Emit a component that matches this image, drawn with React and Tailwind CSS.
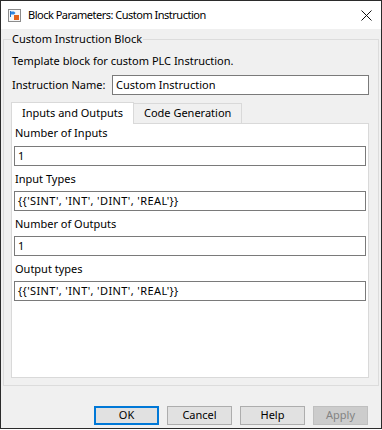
const FONT = { fontFamily: '"Noto Sans", "Open Sans", sans-serif' };

const BlockIcon = () => (
  <svg width="13" height="13" viewBox="0 0 13 13">
    <rect x="0.5" y="0.5" width="12" height="12" fill="#f7f7f7" stroke="#8c8c8c" />
    <path d="M2.5 2 V8" stroke="#1f6fc5" strokeWidth="1" />
    <path d="M3 2.5 H6 L7.5 4 L6 5.5 H3 Z" fill="#2f86df" />
    <rect x="6" y="6" width="5" height="5" fill="#e2631c" />
  </svg>
);

const CloseIcon = () => (
  <svg width="11" height="11" viewBox="0 0 11 11">
    <path d="M0.5 0.5 L10.5 10.5 M10.5 0.5 L0.5 10.5" stroke="#111" strokeWidth="1" />
  </svg>
);

const Field = ({ value, wide }) => (
  <div
    className={
      wide
        ? "h-[20px] border border-[#7a7a7a] bg-white px-[3px] flex items-center text-[11px] tracking-[0.4px] text-black whitespace-nowrap"
        : "h-[20px] border border-[#7a7a7a] bg-white px-[3px] flex items-center text-[11px] text-black whitespace-nowrap"
    }
  >
    {value}
  </div>
);

const Button = ({ children, primary, disabled }) => (
  <div
    className={
      primary
        ? "w-[65px] h-[19px] border-2 border-[#0078d7] bg-[#e1e1e1] flex items-center justify-center text-[11px] text-black"
        : disabled
        ? "w-[55px] h-[19px] border border-[#bfbfbf] bg-[#cccccc] flex items-center justify-center text-[11px] text-[#838383]"
        : "w-[65px] h-[19px] border border-[#adadad] bg-[#e1e1e1] flex items-center justify-center text-[11px] text-black"
    }
  >
    {children}
  </div>
);

export default function App() {
  const params = [
    { label: "Number of Inputs", value: "1" },
    { label: "Input Types", value: "{{'SINT', 'INT', 'DINT', 'REAL'}}", wide: true },
    { label: "Number of Outputs", value: "1" },
    { label: "Output types", value: "{{'SINT', 'INT', 'DINT', 'REAL'}}", wide: true },
  ];

  return (
    <div className="w-[382px] h-[430px] bg-white" style={FONT}>
      <div className="h-[429px] border border-[#2b2b2b] flex flex-col">
        {/* Title bar */}
        <div className="h-[28px] bg-white flex items-center pl-[7px] pr-[9px]">
          <BlockIcon />
          <span className="ml-[7px] text-[11px] leading-[16px] tracking-[-0.5px] text-black">
            Block Parameters: Custom Instruction
          </span>
          <div className="ml-auto flex items-center">
            <CloseIcon />
          </div>
        </div>

        {/* Body */}
        <div className="flex-1 bg-[#f0f0f0] pt-[2px] px-[2px]">
          <fieldset className="border border-[#dcdcdc] pl-[7px] pr-[9px] pb-[7px]">
            <legend className="px-[1px] text-[11px] leading-[16px] text-black">
              Custom Instruction Block
            </legend>
            <div className="mt-[6px] ml-[1px] text-[11px] leading-[16px] text-black">
              Template block for custom PLC Instruction.
            </div>
            <div className="mt-[6px] flex items-center h-[20px]">
              <span className="ml-[1px] w-[100px] whitespace-nowrap text-[11px] leading-[16px] text-black">
                Instruction Name:
              </span>
              <div className="flex-1">
                <Field value="Custom Instruction" />
              </div>
            </div>

            {/* Tabs */}
            <div className="mt-[7px] h-[21px] flex items-end">
              <div className="relative z-10 h-[22px] -mb-px bg-white border-x border-t border-[#d9d9d9] px-[10px] flex items-center text-[11px] text-black">
                Inputs and Outputs
              </div>
              <div className="h-[20px] bg-[#f0f0f0] border-r border-t border-[#d9d9d9] px-[10px] flex items-center text-[11px] text-black">
                Code Generation
              </div>
            </div>

            {/* Panel */}
            <div className="h-[255px] bg-white border border-[#d9d9d9] px-[2px]">
              {params.map((p, i) => (
                <div key={p.label}>
                  <div
                    className={
                      i === 0
                        ? "h-[22px] pt-[1px] pl-[1px] text-[11px] leading-[16px] text-black"
                        : "h-[25px] pl-[1px] flex items-center text-[11px] leading-[16px] text-black"
                    }
                  >
                    {p.label}
                  </div>
                  <Field value={p.value} wide={p.wide} />
                </div>
              ))}
            </div>
          </fieldset>

          {/* Buttons */}
          <div className="mt-[20px] flex justify-end gap-[8px] pr-[11px]">
            <Button primary>OK</Button>
            <Button>Cancel</Button>
            <Button>Help</Button>
            <Button disabled>Apply</Button>
          </div>
        </div>
      </div>
    </div>
  );
}
